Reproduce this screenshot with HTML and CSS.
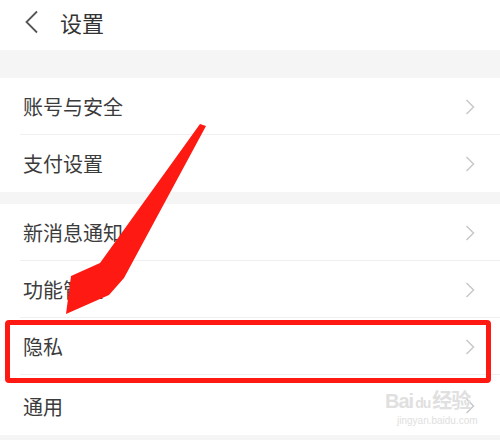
FILE: index.html
```html
<!DOCTYPE html>
<html lang="zh">
<head>
<meta charset="utf-8">
<title>设置</title>
<link rel="stylesheet" href="styles.css">
</head>
<body>
<div class="page">
  <header class="topbar">
    <svg class="back" width="15" height="24" viewBox="0 0 15 24"><path d="M13 1.5 L2.5 12 L13 22.5" fill="none" stroke="#555" stroke-width="1.8"/></svg>
    <span class="title">设置</span>
  </header>
  <div class="gap tall"></div>
  <div class="group">
    <div class="row"><span>账号与安全</span><svg class="chev" width="10" height="16" viewBox="0 0 10 16"><path d="M1.5 1 L8.5 8 L1.5 15" fill="none" stroke="#c9c9c9" stroke-width="1.5"/></svg></div>
    <div class="row last"><span>支付设置</span><svg class="chev" width="10" height="16" viewBox="0 0 10 16"><path d="M1.5 1 L8.5 8 L1.5 15" fill="none" stroke="#c9c9c9" stroke-width="1.5"/></svg></div>
  </div>
  <div class="gap short"></div>
  <div class="group">
    <div class="row"><span>新消息通知</span><svg class="chev" width="10" height="16" viewBox="0 0 10 16"><path d="M1.5 1 L8.5 8 L1.5 15" fill="none" stroke="#c9c9c9" stroke-width="1.5"/></svg></div>
    <div class="row"><span>功能管理</span><svg class="chev" width="10" height="16" viewBox="0 0 10 16"><path d="M1.5 1 L8.5 8 L1.5 15" fill="none" stroke="#c9c9c9" stroke-width="1.5"/></svg></div>
    <div class="row"><span>隐私</span><svg class="chev" width="10" height="16" viewBox="0 0 10 16"><path d="M1.5 1 L8.5 8 L1.5 15" fill="none" stroke="#c9c9c9" stroke-width="1.5"/></svg></div>
    <div class="row last tallrow"><span>通用</span><svg class="chev" width="10" height="16" viewBox="0 0 10 16"><path d="M1.5 1 L8.5 8 L1.5 15" fill="none" stroke="#c9c9c9" stroke-width="1.5"/></svg></div>
  </div>
  <div class="gap bottom"></div>

  <div class="highlight"></div>
  <svg class="arrow" width="500" height="440" viewBox="0 0 500 440">
    <polygon points="206,126 124,278 109,295 66,314 71,276 100,263 200,124" fill="#fe1a12"/>
  </svg>
  <div class="watermark">
    <div class="wm-logo">Bai<span class="paw">du</span>经验</div>
    <div class="wm-url">jingyan.baidu.com</div>
  </div>
</div>
</body>
</html>
```

FILE: styles.css
```css
* { box-sizing: border-box; }
html, body { margin: 0; padding: 0; background: #fff; }
body {
  font-family: "Noto Sans CJK SC", "Noto Sans", sans-serif;
  color: #3a3a3a;
}
.page {
  position: relative;
  width: 500px;
  height: 440px;
  overflow: hidden;
  background: #fff;
}
.topbar {
  height: 50px;
  display: flex;
  align-items: center;
  padding-left: 24px;
  gap: 21px;
}
.back { display: block; margin-top: -6px; }
.title {
  font-size: 22px;
  color: #333;
  margin-top: -7px;
}
.gap { background: #f5f5f5; }
.gap.tall { height: 28px; }
.gap.short { height: 12px; }
.gap.bottom { height: 20px; }
.group { background: #fff; }
.row {
  height: 57px;
  display: flex;
  align-items: center;
  justify-content: space-between;
  padding: 0 25px 0 23px;
  font-size: 20px;
  color: #3c3c3c;
  position: relative;
}
.row.tallrow { height: 60px; padding-top: 2px; }
.row::after {
  content: "";
  position: absolute;
  left: 20px;
  right: 0;
  bottom: 0;
  height: 1px;
  background: #f0f0f0;
}
.row.last::after { display: none; }
.chev { display: block; }
.highlight {
  position: absolute;
  left: 5px;
  top: 320px;
  width: 486px;
  height: 63px;
  border: 5px solid #fe1a12;
  border-radius: 4px;
}
.arrow {
  position: absolute;
  left: 0;
  top: 0;
}
.watermark {
  position: absolute;
  left: 385px;
  top: 391px;
  color: #e0e0e0;
  font-family: "Liberation Sans", "Noto Sans CJK SC", sans-serif;
  line-height: 1;
}
.wm-logo {
  font-size: 20px;
  font-weight: bold;
  height: 22px;
  letter-spacing: -1px;
  white-space: nowrap;
}
.paw {
  font-size: 14px;
  padding: 0 2px;
}
.wm-url {
  font-size: 10px;
  height: 12px;
  margin-top: 3px;
  padding-left: 12px;
  white-space: nowrap;
}
```
